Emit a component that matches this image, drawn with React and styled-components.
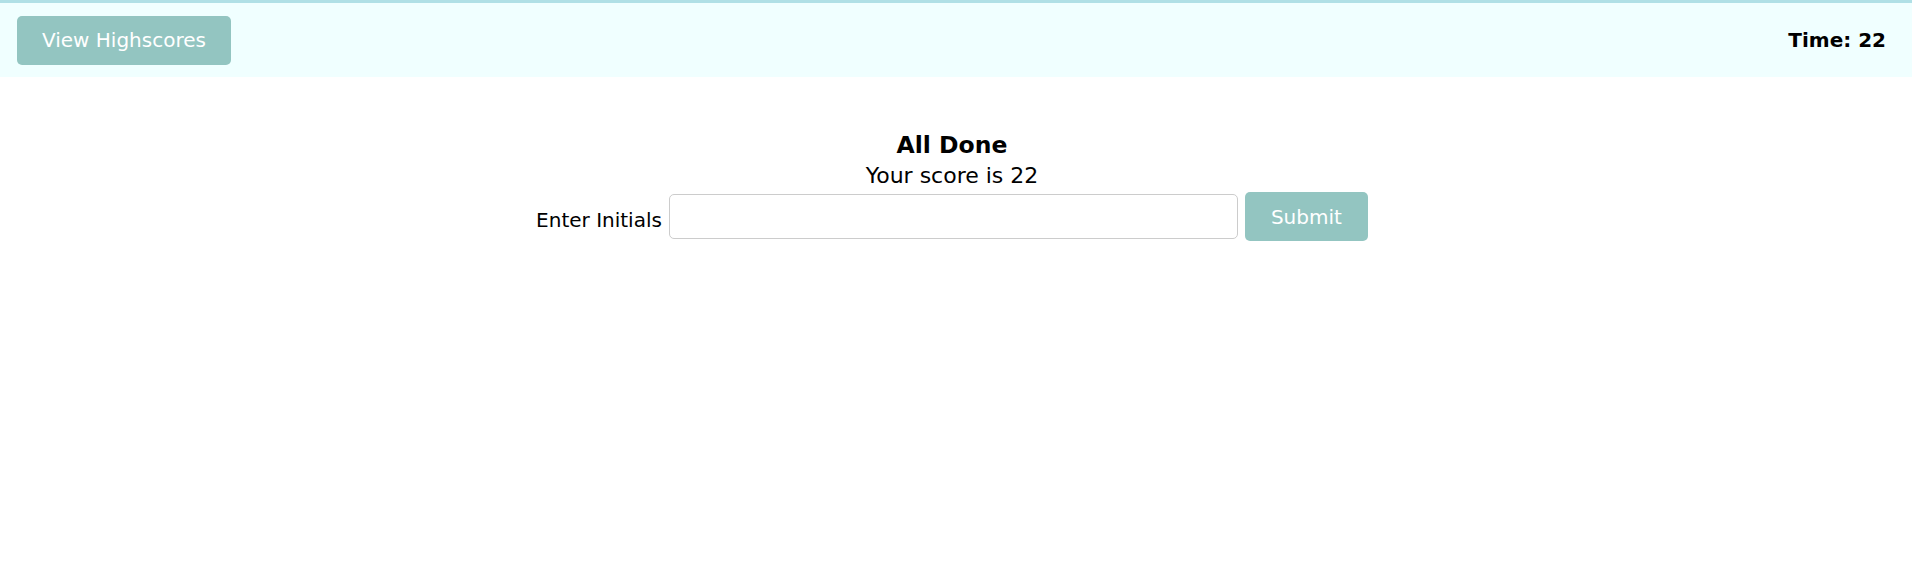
import React, { useState } from 'react';
import styled, { createGlobalStyle } from 'styled-components';

const GlobalStyle = createGlobalStyle`
    body {
        margin: 0;
        background: #ffffff;
        font-family: "DejaVu Sans", Verdana, sans-serif;
        color: #000;
    }
`

const Header = styled.header`
    display: flex;
    justify-content: space-between;
    align-items: center;
    height: 74px;
    padding: 0 26px 0 17px;
    background: #f0ffff;
    border-top: 3px solid #b0e0e6;
`

const Button = styled.button`
    background: #93c5c1;
    color: #ffffff;
    border: none;
    border-radius: 5px;
    font-family: "DejaVu Sans", Verdana, sans-serif;
    font-size: 20px;
    height: 49px;
    padding: 0 ${({ wide }) => (wide ? '25px' : '26px')};
    cursor: pointer;
`

const Timer = styled.div`
    font-weight: 700;
    font-size: 20px;
`

const Main = styled.main`
    display: flex;
    flex-direction: column;
    align-items: center;
    padding: 55px 8px 0 0;
`

const Title = styled.h2`
    margin: 0;
    font-size: 23.5px;
    line-height: 27px;
    font-weight: 700;
`

const Score = styled.p`
    margin: 4px 0 0;
    font-size: 22px;
    line-height: 25px;
`

const Row = styled.form`
    display: flex;
    align-items: center;
    gap: 7px;
    margin-top: 4px;
`

const Label = styled.label`
    font-size: 20px;
    margin-top: 6px;
`

const Input = styled.input`
    width: 569px;
    height: 45px;
    box-sizing: border-box;
    border: 1px solid #cccccc;
    border-radius: 5px;
    font-size: 20px;
    padding: 0 10px;
    margin-top: -1px;
    outline: none;
`

const App = () => {
    const [initials, setInitials] = useState('');
    return (
        <>
            <GlobalStyle />
            <Header>
                <Button wide type="button">View Highscores</Button>
                <Timer>Time: 22</Timer>
            </Header>
            <Main>
                <Title>All Done</Title>
                <Score>Your score is 22</Score>
                <Row onSubmit={(e) => e.preventDefault()}>
                    <Label htmlFor="initials">Enter Initials</Label>
                    <Input
                        id="initials"
                        type="text"
                        value={initials}
                        onChange={(e) => setInitials(e.target.value)}
                    />
                    <Button type="submit">Submit</Button>
                </Row>
            </Main>
        </>
    )
}

export default App
